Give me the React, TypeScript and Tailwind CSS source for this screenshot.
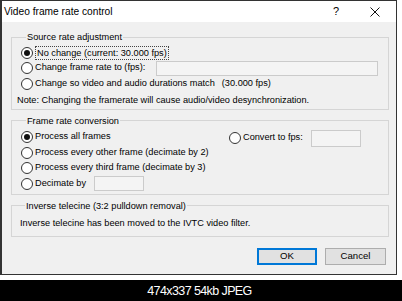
import type { ReactNode } from "react";

const Radio = ({ checked }: { checked?: boolean }) => (
  <span className="w-[12px] h-[12px] rounded-full border border-[#333] bg-white flex items-center justify-center shrink-0">
    {checked && <span className="w-[6px] h-[6px] rounded-full bg-[#111]" />}
  </span>
);

const Option = ({ checked, children }: { checked?: boolean; children: ReactNode }) => (
  <div className="flex items-center gap-[2px] h-[15.5px]">
    <Radio checked={checked} />
    {children}
  </div>
);

const Group = ({ title, children, className }: { title: string; children: ReactNode; className?: string }) => (
  <fieldset className={`mx-0 ml-[9px] mr-[7px] border border-[#d5d5d5] ${className ?? ""}`}>
    <legend className="ml-[5px] px-[1px] leading-[12px]">{title}</legend>
    {children}
  </fieldset>
);

const Field = ({ className }: { className: string }) => <div className={`border border-[#cbcbcb] bg-[#f4f4f4] ${className}`} />;

export default function App() {
  return (
    <div className="w-[402px] h-[301px] bg-white flex flex-col overflow-hidden font-['Liberation_Sans',Arial,sans-serif] text-black">
      {/* dialog */}
      <div className="w-[397px] h-[277px] border-l-2 border-r border-t border-b border-[#333] bg-[#f0f0f0] flex flex-col">
        <div className="h-[21px] bg-white flex items-center pl-[2px] text-[10.2px]">
          <span>Video frame rate control</span>
          <span className="ml-auto text-[11px] mr-[31px]">?</span>
          <svg width="10" height="10" viewBox="0 0 10 10" className="mr-[16px]">
            <path d="M0.5 0.5 L9.5 9.5 M9.5 0.5 L0.5 9.5" stroke="#111" strokeWidth="1" fill="none" />
          </svg>
        </div>

        <div className="flex-1 flex flex-col pt-[9px] text-[9.2px]">
          <Group title="Source rate adjustment" className="pl-[9px] pr-[10px] pt-[2px] pb-[0px]">
            <Option checked>
              <span className="border border-dotted border-[#444] px-[1px] leading-[12px]">No change (current: 30.000 fps)</span>
            </Option>
            <Option>
              <span>Change frame rate to (fps):</span>
              <Field className="ml-auto w-[222px] h-[15px]" />
            </Option>
            <Option>
              <span>Change so video and audio durations match</span>
              <span className="ml-[5px]">(30.000 fps)</span>
            </Option>
            <div className="-ml-[4px] h-[16px] mt-[1px] flex items-center">
              Note: Changing the framerate will cause audio/video desynchronization.
            </div>
          </Group>

          <Group title="Frame rate conversion" className="mt-[5px] pl-[9px] pt-[3px] pb-[2px]">
            <div className="flex">
              <div className="w-[208px] flex flex-col">
                <Option checked>
                  <span>Process all frames</span>
                </Option>
                <Option>
                  <span>Process every other frame (decimate by 2)</span>
                </Option>
                <Option>
                  <span>Process every third frame (decimate by 3)</span>
                </Option>
                <Option>
                  <span>Decimate by</span>
                  <Field className="ml-[6px] w-[50px] h-[15px]" />
                </Option>
              </div>
              <div className="h-[17px] flex items-center gap-[2px]">
                <Radio />
                <span>Convert to fps:</span>
                <Field className="ml-[6px] w-[50px] h-[17px]" />
              </div>
            </div>
          </Group>

          <Group title="Inverse telecine (3:2 pulldown removal)" className="mt-[5px] pl-[8px] pt-[5px] pb-[5px]">
            <div className="h-[14px] flex items-center">Inverse telecine has been moved to the IVTC video filter.</div>
          </Group>

          <div className="mt-[11px] flex justify-end gap-[8px] mr-[10px] text-[9.6px]">
            <button className="w-[60px] h-[17px] border-2 border-[#0078d7] bg-[#e1e1e1] flex items-center justify-center">OK</button>
            <button className="w-[61px] h-[17px] border border-[#adadad] bg-[#e1e1e1] flex items-center justify-center">Cancel</button>
          </div>
        </div>
      </div>

      <div className="h-[5px]" />

      <div className="flex-1 bg-black text-white flex items-center justify-center pt-[2px] pr-[3px] text-[12.5px] tracking-[-0.6px]">
        474x337 54kb JPEG
      </div>
    </div>
  );
}
